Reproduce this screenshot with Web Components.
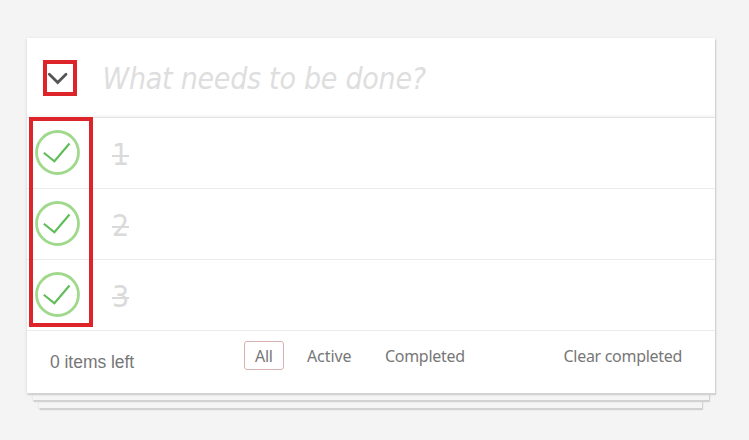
<!DOCTYPE html>
<html lang="en"><head><meta charset="utf-8"><title>Todos</title>
<style>body{margin:0;background:#f4f4f4;height:440px;overflow:hidden}</style></head>
<body>
<todo-card>
  <todo-header slot="header">What needs to be done?</todo-header>
  <todo-item>1</todo-item><todo-item>2</todo-item><todo-item>3</todo-item>
  <todo-footer slot="footer"></todo-footer>
</todo-card>
<script>
function define(name, html) {
  const t = document.createElement('template');
  t.innerHTML = html;
  customElements.define(name, class extends HTMLElement {
    constructor() { super(); this.attachShadow({mode: 'open'}).append(t.content.cloneNode(true)); }
  });
}
define('todo-card', `<style>
:host{display:block;padding:38px 34px 0 27px}
.card{position:relative;z-index:2;height:355px;display:flex;flex-direction:column;background:#fff;box-shadow:0 1px 3px #d0d0d0,1px 2px 1px #d6d6d6}
.mark{position:absolute;left:2px;top:79px;width:56px;height:202px;border:4px solid #dd242b}
.sheet{position:relative;background:#f5f5f5;box-shadow:0 1px 2px #d0d0d0,1px 2px 1px #d4d4d4}
.s1{z-index:1;height:7px;margin:0 6px}
.s2{height:8px;margin:0 13px 0 12px}
</style><div class="card"><slot name="header"></slot><slot></slot><slot name="footer"></slot><div class="mark"></div></div><div class="sheet s1"></div><div class="sheet s2"></div>`);
define('todo-header', `<style>
:host{display:flex;align-items:flex-start;box-sizing:border-box;height:80px;border-bottom:1px solid #e2e2e2;box-shadow:inset 0 -2px 1px #f7f7f7}
.toggle{box-sizing:border-box;width:34px;height:36px;border:4px solid #dd242b;margin:22px 0 0 16px;flex:none}
svg{display:block}
.text{margin:21px 0 0 25.5px;font:italic 30px/40px "DejaVu Sans Condensed","DejaVu Sans",sans-serif;font-stretch:condensed;color:#dedede;letter-spacing:-.27px;white-space:nowrap}
</style><div class="toggle"><svg width="26" height="28" viewBox="0 0 26 28"><path d="M2.3 10.3 10.7 18.5 19 10.3" fill="none" stroke="#555" stroke-width="2.8" stroke-linecap="round"/></svg></div><div class="text"><slot></slot></div>`);
define('todo-item', `<style>
:host{display:flex;align-items:center;box-sizing:border-box;height:71px;border-bottom:1px solid #ebebeb}
svg{margin-left:7px;flex:none}
.text{margin:3px 0 0 31px;font:30px/40px "DejaVu Sans Condensed","DejaVu Sans",sans-serif;font-stretch:condensed;color:#dadada;position:relative}
.text::after{content:"";position:absolute;left:0;right:0;top:20px;height:2px;background:#dadada}
</style><svg width="47" height="47" viewBox="0 0 47 47"><circle cx="23.5" cy="22.5" r="21" fill="none" stroke="#a0d98b" stroke-width="2.8"/><path d="M9.8 22.8 20.4 31.3 35.5 13.5" fill="none" stroke="#5fbd57" stroke-width="2.1"/></svg><div class="text"><slot></slot></div>`);
define('todo-footer', `<style>
:host{display:flex;align-items:flex-start;height:62px;box-sizing:border-box;padding:10px 33px 0 23px;color:#777;font:16px/28px "Noto Sans",sans-serif;white-space:nowrap}
.count{font:17.5px/26px "Liberation Sans",sans-serif;letter-spacing:-.04px;width:194px;padding-top:8px}
.filters{display:flex}
.f{box-sizing:border-box;height:29px;border:1px solid transparent;border-radius:3px;padding:0 10px}
.all{width:40px;border-color:#dab1b1}.active{margin-left:12px;width:66px;letter-spacing:-.1px!important}.done{margin-left:12px}
.clear{margin-left:auto;padding-top:1px}
.f,.clear{letter-spacing:-.3px}
</style><span class="count">0 items left</span><div class="filters"><span class="f all">All</span><span class="f active">Active</span><span class="f done">Completed</span></div><span class="clear">Clear completed</span>`);
</script></body></html>
